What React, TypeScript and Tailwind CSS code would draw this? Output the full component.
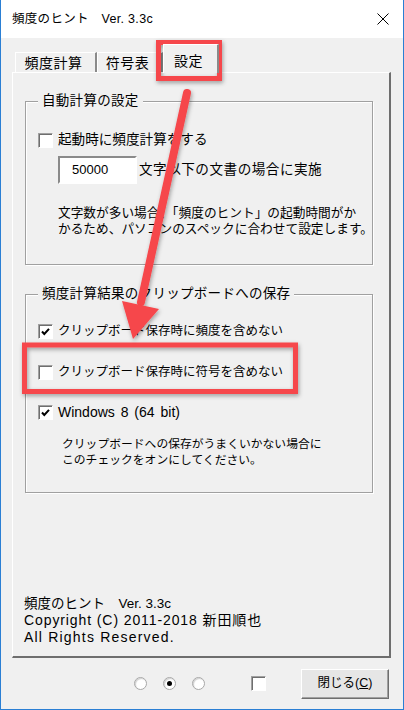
import React from "react"

const font = "font-['Liberation_Sans','Noto_Sans_CJK_JP',sans-serif]"

function CheckBox({ checked }: { checked?: boolean }) {
  return (
    <span className="flex h-[15px] w-[15px] shrink-0 items-center justify-center border border-t-[#a0a0a0] border-l-[#a0a0a0] border-r-white border-b-white bg-white shadow-[inset_1px_1px_0_#6e6e6e]">
      {checked && (
        <svg width="11" height="11" viewBox="0 0 11 11">
          <path d="M2 5.5 L4.3 8 L9 2.8" fill="none" stroke="#000" strokeWidth="2" />
        </svg>
      )}
    </span>
  )
}

function Radio({ checked }: { checked?: boolean }) {
  return (
    <span className="flex h-[13px] w-[13px] items-center justify-center rounded-full border border-[#a8a8a8] bg-white shadow-[inset_1px_1px_1px_#d0d0d0]">
      {checked && <span className="h-[5px] w-[5px] rounded-full bg-black" />}
    </span>
  )
}

function Group({ title, className, children }: { title: string; className: string; children: React.ReactNode }) {
  return (
    <div className={`relative border border-[#a0a0a0] shadow-[1px_1px_0_#fff,inset_1px_1px_0_#fff] ${className}`}>
      <span className="absolute -top-[10px] left-[12px] bg-[#f0f0f0] px-[4px] text-[13.5px] leading-[18px] tracking-[0.3px]">
        {title}
      </span>
      {children}
    </div>
  )
}

export default function App() {
  return (
    <div className={`relative h-[710px] w-[404px] overflow-hidden border-x border-b border-[#2a7fd4] bg-[#f0f0f0] text-black ${font}`}>
      {/* title bar */}
      <div className="flex h-[38px] items-center justify-between bg-white pl-[11px] pr-[14px]">
        <span className="text-[12.5px] tracking-[0.3px]">頻度のヒント　Ver. 3.3c</span>
        <svg width="12" height="12" viewBox="0 0 12 12">
          <path d="M0.5 0.5 L11.5 11.5 M11.5 0.5 L0.5 11.5" stroke="#000" strokeWidth="1" />
        </svg>
      </div>

      {/* tabs */}
      <div className="ml-[11px] w-[379px]">
        <div className="flex h-[34px] items-end pl-[3px] text-[14px] tracking-[0.5px]">
          <div className="flex h-[20px] w-[82px] items-center justify-center border-l border-t border-r-2 border-l-white border-t-white border-r-[#8a8a8a] pr-[4px] pt-[2px]">
            頻度計算
          </div>
          <div className="flex h-[20px] w-[66px] items-center justify-center border-l border-t border-r-2 border-l-white border-t-white border-r-[#8a8a8a] pr-[4px] pt-[2px]">
            符号表
          </div>
          <div className="relative z-10 -mb-px flex h-[29px] w-[56px] items-start justify-center border-l border-t border-r-2 border-l-white border-t-white border-r-[#8a8a8a] bg-[#f0f0f0] pr-[4px] pt-[6px]">
            設定
          </div>
        </div>

        {/* panel */}
        <div className="flex h-[586px] flex-col border-l border-t border-r-2 border-b-2 border-l-white border-t-white border-r-[#6e6e6e] border-b-[#6e6e6e] pl-[12px] pb-[10px]">
          <Group title="自動計算の設定" className="mt-[28px] h-[164px] w-[348px]">
            <div className="ml-[12px] mt-[28px] flex h-[20px] items-center gap-[5px] text-[13.6px]">
              <CheckBox />
              <span>起動時に頻度計算をする</span>
            </div>
            <div className="ml-[32px] mt-[6px] flex h-[28px] items-center gap-[2px]">
              <div className="flex h-[28px] w-[79px] items-center border-2 border-t-[#8a8a8a] border-l-[#8a8a8a] border-r-white border-b-white bg-white pl-[12px] text-[13px]">
                50000
              </div>
              <span className="text-[13.6px] tracking-[0.5px]">文字以下の文書の場合に実施</span>
            </div>
            <div className="ml-[32px] mt-[21px] whitespace-nowrap text-[12.7px] leading-[16px]">
              <div>文字数が多い場合、「頻度のヒント」の起動時間がか</div>
              <div>かるため、パソコンのスペックに合わせて設定します。</div>
            </div>
          </Group>

          <Group title="頻度計算結果のクリップボードへの保存" className="mt-[29px] h-[199px] w-[348px]">
            <div className="ml-[12px] mt-[26px] flex h-[20px] items-center gap-[5px] text-[12.5px]">
              <CheckBox checked />
              <span>クリップボード保存時に頻度を含めない</span>
            </div>
            <div className="ml-[12px] mt-[21px] flex h-[20px] items-center gap-[5px] text-[12.5px]">
              <CheckBox />
              <span>クリップボード保存時に符号を含めない</span>
            </div>
            <div className="ml-[12px] mt-[20px] flex h-[20px] items-center gap-[5px] text-[14px]">
              <CheckBox checked />
              <span className="[word-spacing:2px]">Windows 8 (64 bit)</span>
            </div>
            <div className="ml-[36px] mt-[14px] whitespace-nowrap text-[11.8px] leading-[16px]">
              <div>クリップボードへの保存がうまくいかない場合に</div>
              <div>このチェックをオンにしてください。</div>
            </div>
          </Group>

          <div className="mt-auto -ml-[1px] whitespace-nowrap text-[14px] leading-[17px]">
            <div className="text-[13.5px]">頻度のヒント　Ver. 3.3c</div>
            <div className="tracking-[0.9px]">Copyright (C) 2011-2018 新田順也</div>
            <div className="tracking-[1.2px]">All Rights Reserved.</div>
          </div>
        </div>
      </div>

      {/* bottom row */}
      <div className="flex h-[51px] items-center pl-[133px]">
        <Radio />
        <span className="ml-[16px]">
          <Radio checked />
        </span>
        <span className="ml-[16px]">
          <Radio />
        </span>
        <span className="ml-[46px]">
          <CheckBox />
        </span>
        <button className="ml-[35px] flex h-[30px] w-[88px] items-center justify-center border border-t-white border-l-white border-r-[#6e6e6e] border-b-[#6e6e6e] bg-[#e6e6e6] text-[12.5px] shadow-[inset_-1px_-1px_0_#a0a0a0]">
          閉じる(<span className="underline">C</span>)
        </button>
      </div>

      {/* red annotations */}
      <svg className="pointer-events-none absolute -left-px top-0" width="404" height="710" viewBox="0 0 404 710">
        <defs>
          <filter id="sh" x="-20%" y="-20%" width="140%" height="140%">
            <feDropShadow dx="1" dy="2" stdDeviation="2" floodColor="#000" floodOpacity="0.35" />
          </filter>
        </defs>
        <g filter="url(#sh)" fill="none" stroke="#f6464b" strokeWidth="5">
          <rect x="158.5" y="42.5" width="61" height="36" />
          <rect x="24.5" y="345" width="271" height="46.5" />
        </g>
        <g filter="url(#sh)">
          <path d="M187 93 L141 302" stroke="#f6464b" strokeWidth="8" strokeLinecap="round" />
          <path d="M122 301 L159 309 L133 339 Z" fill="#f6464b" />
        </g>
      </svg>
    </div>
  )
}
